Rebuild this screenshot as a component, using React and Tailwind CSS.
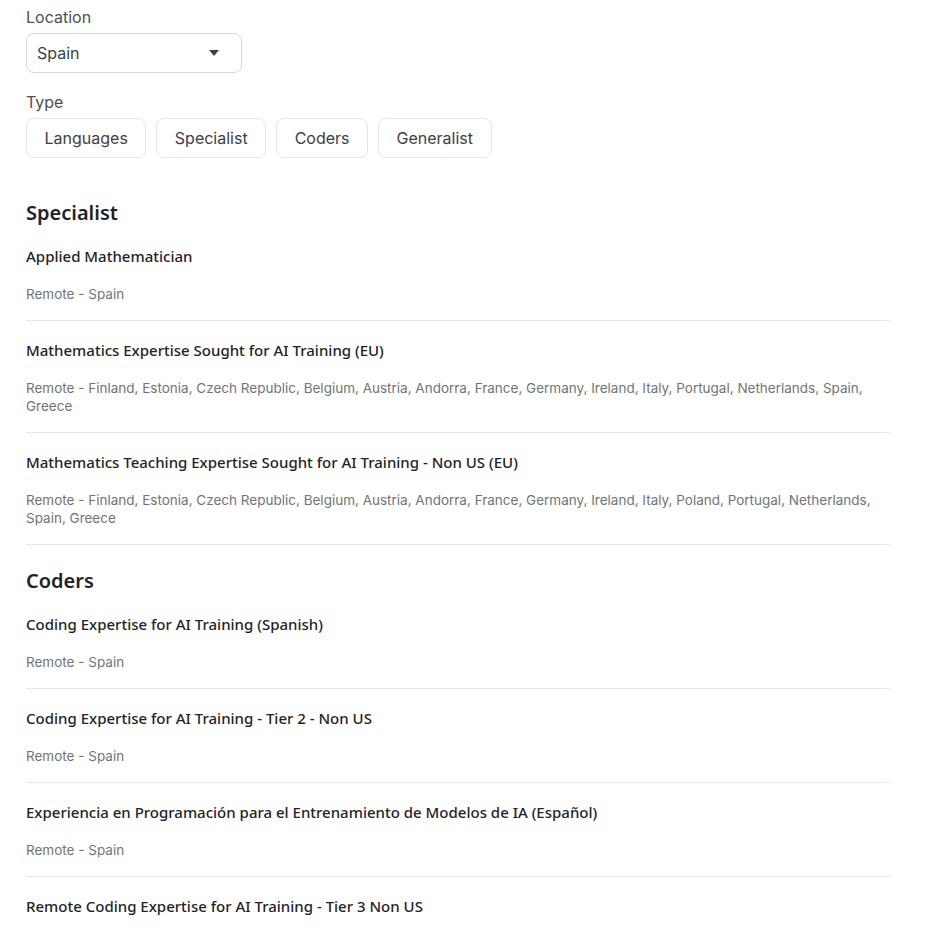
import React, { useState } from "react";

const types = ["Languages", "Specialist", "Coders", "Generalist"];

const sections = [
  {
    name: "Specialist",
    jobs: [
      { title: "Applied Mathematician", location: "Remote - Spain" },
      {
        title: "Mathematics Expertise Sought for AI Training (EU)",
        location:
          "Remote - Finland, Estonia, Czech Republic, Belgium, Austria, Andorra, France, Germany, Ireland, Italy, Portugal, Netherlands, Spain, Greece",
      },
      {
        title: "Mathematics Teaching Expertise Sought for AI Training - Non US (EU)",
        location:
          "Remote - Finland, Estonia, Czech Republic, Belgium, Austria, Andorra, France, Germany, Ireland, Italy, Poland, Portugal, Netherlands, Spain, Greece",
      },
    ],
  },
  {
    name: "Coders",
    jobs: [
      { title: "Coding Expertise for AI Training (Spanish)", location: "Remote - Spain" },
      { title: "Coding Expertise for AI Training - Tier 2 - Non US", location: "Remote - Spain" },
      {
        title: "Experiencia en Programación para el Entrenamiento de Modelos de IA (Español)",
        location: "Remote - Spain",
      },
      { title: "Remote Coding Expertise for AI Training - Tier 3 Non US", location: "Remote - Spain" },
    ],
  },
];

function JobRow({ job }) {
  return (
    <div className="pt-[18px] pb-[17px] border-b border-[#e5e7eb]">
      <h3 className="text-[15px] leading-[22px] font-medium text-[#1f2328] font-['Noto_Sans',sans-serif]">
        {job.title}
      </h3>
      <p className="mt-[18px] text-[13.5px] leading-[18px] text-[#707478] font-['Inter',sans-serif] pr-4">
        {job.location}
      </p>
    </div>
  );
}

export default function App() {
  const [type, setType] = useState(null);

  return (
    <div className="bg-white min-h-screen pl-[26px] pt-[5px] font-['Inter',sans-serif]">
      <div className="w-[864px]">
        {/* Filters */}
        <label className="block text-[16px] leading-6 text-[#4b5055]">Location</label>
        <div className="mt-[4px] w-[216px] h-10 border border-[#d6d8db] rounded-lg flex items-center justify-between pl-[10px] pr-[22px] text-[16px] text-[#3b4045]">
          <span>Spain</span>
          <svg width="10" height="6" viewBox="0 0 10 6">
            <path d="M0 0h10L5 6z" fill="#3b4045" />
          </svg>
        </div>

        <label className="block mt-[17px] text-[16px] leading-6 text-[#4b5055]">Type</label>
        <div className="mt-[4px] flex gap-[10px]">
          {types.map((t) => (
            <button
              key={t}
              onClick={() => setType(t)}
              className={
                "h-10 px-[17.5px] rounded-lg border border-[#e3e5e8] text-[16px] text-[#3b4045] bg-white " +
                (type === t ? "border-[#9ca3af]" : "")
              }
            >
              {t}
            </button>
          ))}
        </div>

        {/* Results */}
        <div className="mt-[41px]">
          {sections.map((s, i) => (
            <div key={s.name} className={i > 0 ? "mt-[22px]" : ""}>
              <h2 className="text-[20px] leading-7 font-semibold text-[#1f2328] font-['Noto_Sans',sans-serif]">
                {s.name}
              </h2>
              {s.jobs.map((job) => (
                <JobRow key={job.title} job={job} />
              ))}
            </div>
          ))}
        </div>
      </div>
    </div>
  );
}
